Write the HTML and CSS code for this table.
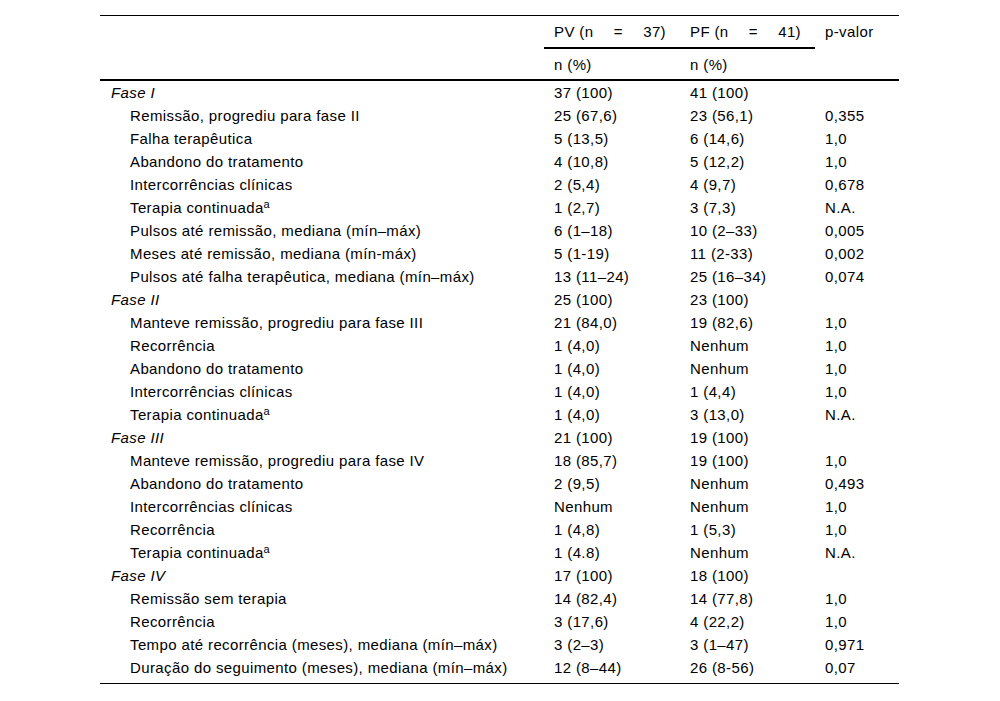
FILE: index.html
```html
<!DOCTYPE html>
<html lang="pt">
<head>
<meta charset="utf-8">
<title>Tabela</title>
<link rel="stylesheet" href="styles.css">
</head>
<body>
<div class="wrap">
<table class="tbl">
  <colgroup>
    <col class="c1"><col class="c2"><col class="c3"><col class="c4">
  </colgroup>
  <thead>
    <tr class="h1">
      <th rowspan="2"></th>
      <th class="grp"><span class="just"><span>PV (n</span><span>=</span><span>37)</span></span></th>
      <th class="grp"><span class="just"><span>PF (n</span><span>=</span><span>41)</span></span></th>
      <th rowspan="2" class="pv">p-valor</th>
    </tr>
    <tr class="h2">
      <th>n (%)</th>
      <th>n (%)</th>
    </tr>
  </thead>
  <tbody>
    <tr><td class="sec">Fase I</td><td>37 (100)</td><td>41 (100)</td><td></td></tr>
    <tr><td class="ind">Remissão, progrediu para fase II</td><td>25 (67,6)</td><td>23 (56,1)</td><td>0,355</td></tr>
    <tr><td class="ind">Falha terapêutica</td><td>5 (13,5)</td><td>6 (14,6)</td><td>1,0</td></tr>
    <tr><td class="ind">Abandono do tratamento</td><td>4 (10,8)</td><td>5 (12,2)</td><td>1,0</td></tr>
    <tr><td class="ind">Intercorrências clínicas</td><td>2 (5,4)</td><td>4 (9,7)</td><td>0,678</td></tr>
    <tr><td class="ind">Terapia continuada<sup>a</sup></td><td>1 (2,7)</td><td>3 (7,3)</td><td>N.A.</td></tr>
    <tr><td class="ind">Pulsos até remissão, mediana (mín–máx)</td><td>6 (1–18)</td><td>10 (2–33)</td><td>0,005</td></tr>
    <tr><td class="ind">Meses até remissão, mediana (mín-máx)</td><td>5 (1-19)</td><td>11 (2-33)</td><td>0,002</td></tr>
    <tr><td class="ind">Pulsos até falha terapêutica, mediana (mín–máx)</td><td>13 (11–24)</td><td>25 (16–34)</td><td>0,074</td></tr>
    <tr><td class="sec">Fase II</td><td>25 (100)</td><td>23 (100)</td><td></td></tr>
    <tr><td class="ind">Manteve remissão, progrediu para fase III</td><td>21 (84,0)</td><td>19 (82,6)</td><td>1,0</td></tr>
    <tr><td class="ind">Recorrência</td><td>1 (4,0)</td><td>Nenhum</td><td>1,0</td></tr>
    <tr><td class="ind">Abandono do tratamento</td><td>1 (4,0)</td><td>Nenhum</td><td>1,0</td></tr>
    <tr><td class="ind">Intercorrências clínicas</td><td>1 (4,0)</td><td>1 (4,4)</td><td>1,0</td></tr>
    <tr><td class="ind">Terapia continuada<sup>a</sup></td><td>1 (4,0)</td><td>3 (13,0)</td><td>N.A.</td></tr>
    <tr><td class="sec">Fase III</td><td>21 (100)</td><td>19 (100)</td><td></td></tr>
    <tr><td class="ind">Manteve remissão, progrediu para fase IV</td><td>18 (85,7)</td><td>19 (100)</td><td>1,0</td></tr>
    <tr><td class="ind">Abandono do tratamento</td><td>2 (9,5)</td><td>Nenhum</td><td>0,493</td></tr>
    <tr><td class="ind">Intercorrências clínicas</td><td>Nenhum</td><td>Nenhum</td><td>1,0</td></tr>
    <tr><td class="ind">Recorrência</td><td>1 (4,8)</td><td>1 (5,3)</td><td>1,0</td></tr>
    <tr><td class="ind">Terapia continuada<sup>a</sup></td><td>1 (4.8)</td><td>Nenhum</td><td>N.A.</td></tr>
    <tr><td class="sec">Fase IV</td><td>17 (100)</td><td>18 (100)</td><td></td></tr>
    <tr><td class="ind">Remissão sem terapia</td><td>14 (82,4)</td><td>14 (77,8)</td><td>1,0</td></tr>
    <tr><td class="ind">Recorrência</td><td>3 (17,6)</td><td>4 (22,2)</td><td>1,0</td></tr>
    <tr><td class="ind">Tempo até recorrência (meses), mediana (mín–máx)</td><td>3 (2–3)</td><td>3 (1–47)</td><td>0,971</td></tr>
    <tr class="last"><td class="ind">Duração do seguimento (meses), mediana (mín–máx)</td><td>12 (8–44)</td><td>26 (8-56)</td><td>0,07</td></tr>
  </tbody>
</table>
</div>
</body>
</html>
```

FILE: styles.css
```css
html, body {
  margin: 0;
  padding: 0;
  background: #fff;
}
body {
  font-family: "Liberation Sans", Arial, sans-serif;
  font-size: 15px;
  letter-spacing: 0.38px;
  color: #000;
}
.wrap {
  padding: 15px 0 0 100px;
}
.tbl {
  border-collapse: collapse;
  width: 799px;
  table-layout: fixed;
  border-top: 1px solid #000;
  border-bottom: 1px solid #000;
}
.c1 { width: 444px; }
.c2 { width: 136px; }
.c3 { width: 135px; }
.c4 { width: 84px; }

.tbl th {
  font-weight: normal;
  text-align: left;
  padding: 0 10px;
  vertical-align: middle;
}
.h1 th {
  height: 31px;
}
.h2 th {
  height: 30px;
}
.tbl th.grp {
  border-bottom: 2px solid #000;
  padding-right: 14px;
}
.just {
  display: flex;
  justify-content: space-between;
}
.tbl th.pv {
  vertical-align: top;
  padding-top: 7px;
}
.tbl thead {
  border-bottom: 2px solid #000;
}
.tbl td {
  height: 23px;
  padding: 0 10px;
  line-height: 23px;
  white-space: nowrap;
}
.tbl td.sec {
  font-style: italic;
  padding-left: 11px;
}
.tbl td.ind {
  padding-left: 30px;
}
.tbl tr.last td {
  height: 27px;
  vertical-align: top;
}
sup {
  font-size: 11px;
  line-height: 0;
  vertical-align: 5px;
  letter-spacing: 0;
}
```
